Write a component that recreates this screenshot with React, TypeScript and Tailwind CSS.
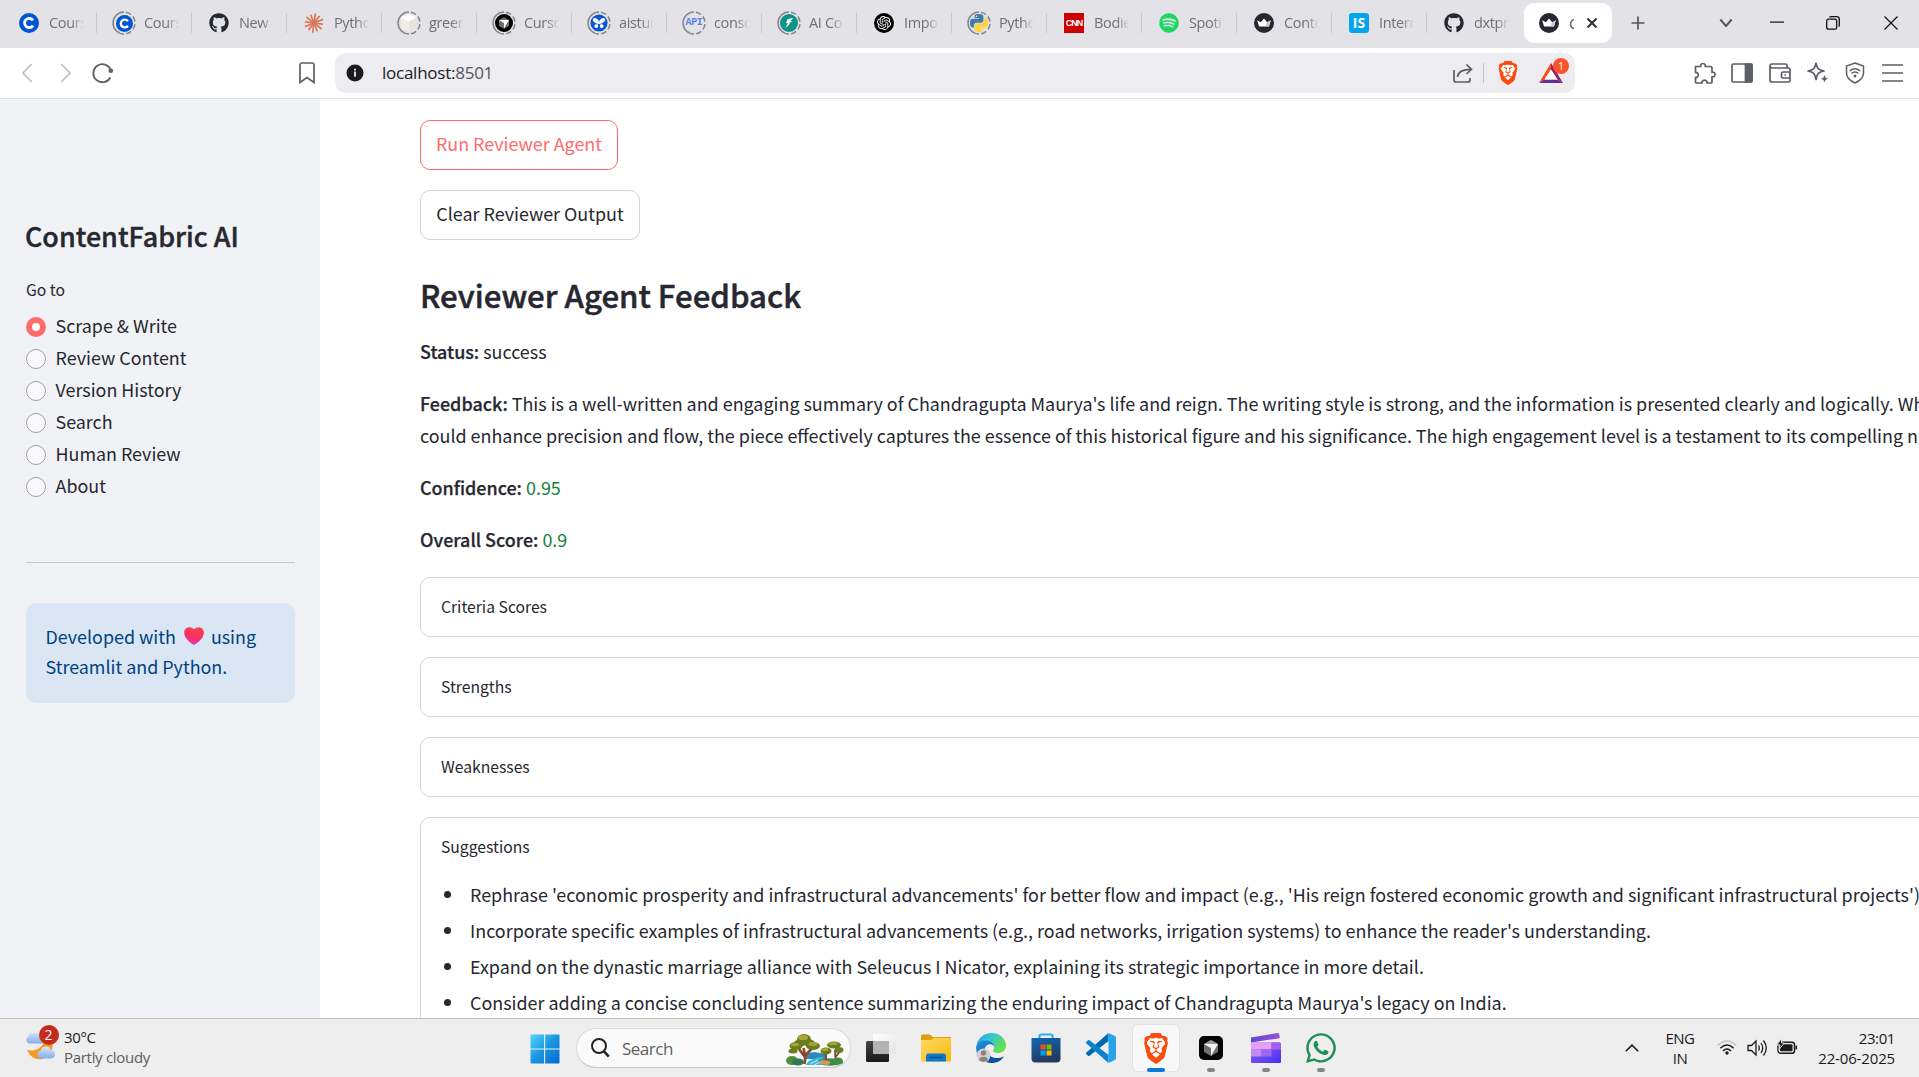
import type { ReactNode } from "react";
import { FaGithub, FaSpotify, FaWhatsapp } from "react-icons/fa";
import { SiBrave, SiOpenai } from "react-icons/si";

const UI = "font-['Open_Sans','Noto_Sans',sans-serif]";
const BODY = "font-['Noto_Sans_CJK_SC','Noto_Sans',sans-serif]";

/* ---------- tab icons ---------- */

const Ring = ({ children }: { children: ReactNode }) => (
  <span className="relative grid size-5 place-items-center">
    <svg className="absolute -left-0.5 -top-0.5 size-6" viewBox="0 0 24 24" fill="none" stroke="#85868c" strokeWidth="1.5">
      <path d="M12 1a11 11 0 0 0 0 22" />
      <path d="M12 1a11 11 0 0 1 0 22" strokeDasharray="5.5 2.7" strokeDashoffset="-2" />
    </svg>
    {children}
  </span>
);

const Coursera = ({ s = 20 }: { s?: number }) => (
  <svg width={s} height={s} viewBox="0 0 20 20">
    <circle cx="10" cy="10" r="10" fill="#0056d2" />
    <path d="M14 7.4A4.6 4.6 0 1 0 14 12.6" fill="none" stroke="#fff" strokeWidth="2.8" />
  </svg>
);

const Claude = () => (
  <svg width="20" height="20" viewBox="0 0 20 20" stroke="#d97757" strokeWidth="1.7" strokeLinecap="round">
    {[0, 30, 60, 90, 120, 150, 180, 210, 240, 270, 300, 330].map((a) => (
      <path key={a} d={a % 60 ? "M10 10V1.6" : "M10 10V.9"} transform={`rotate(${a + 8} 10 10)`} />
    ))}
  </svg>
);

const Cube = () => (
  <svg width="18" height="18" viewBox="0 0 18 18">
    <path d="M9 0l8 3.6v10L9 18l-8-4.400v-10z" fill="#efeee8" />
    <path d="M9 0l8 3.600L9 7.500 1 3.600z" fill="#fff" />
    <path d="M9 7.500V18l8-4.400v-10z" fill="#e6e4dc" />
  </svg>
);

const CursorDot = () => (
  <svg width="18" height="18" viewBox="0 0 18 18">
    <circle cx="9" cy="9" r="9" fill="#000" />
    <path d="M9 3.200l5 2.800v6L9 14.800 4 12V6z" fill="#6d6d6d" />
    <path d="M4 6h10L9 14.800V9z" fill="#fff" />
  </svg>
);

const AiStudio = () => (
  <svg width="18" height="18" viewBox="0 0 18 18">
    <circle cx="9" cy="9" r="8.600" fill="#0b57d0" />
    <g fill="#fff">
      <ellipse cx="5.800" cy="6.700" rx="3.300" ry="2.100" transform="rotate(40 5.800 6.700)" />
      <ellipse cx="12.200" cy="6.700" rx="3.300" ry="2.100" transform="rotate(-40 12.200 6.700)" />
      <circle cx="6.300" cy="12.100" r="1.900" />
      <circle cx="11.700" cy="12.100" r="1.900" />
      <path d="M6 11l3-3.500 3 3.500-3-1.200z" />
    </g>
  </svg>
);

const Api = () => (
  <span className="font-['Liberation_Mono',monospace] text-[10px] font-bold leading-none tracking-[-0.3px] text-[#5c82f2]">API</span>
);

const Filmora = () => (
  <svg width="18" height="18" viewBox="0 0 18 18">
    <circle cx="9" cy="9" r="9" fill="#0d9488" />
    <path d="M13.300 3.700L7.700 5.300 5.800 9.200l2.300-.3-3 5.300 5.200-4.800-1.700-.1 3.900-1.700-2-.5z" fill="#fff" />
  </svg>
);

const OpenAi = () => (
  <span className="grid size-5 place-items-center rounded-full bg-black text-white">
    <SiOpenai size={14} />
  </span>
);

const PY =
  "M14.250.180l.9.200.730.260.590.300.450.320.340.340.250.340.160.330.100.300.040.260.020.200-.010.130V8.500l-.050.630-.130.550-.210.460-.260.380-.300.310-.330.250-.350.190-.350.140-.330.100-.300.070-.260.040-.210.020H8.770l-.690.050-.590.140-.500.220-.410.270-.330.320-.270.350-.200.360-.150.370-.100.350-.070.320-.040.270-.020.210v3.060H3.170l-.210-.030-.280-.070-.320-.120-.350-.180-.360-.260-.360-.360-.350-.460-.320-.590-.280-.730-.210-.880-.140-1.050-.050-1.230.060-1.220.160-1.040.240-.870.320-.710.360-.570.400-.440.420-.330.420-.240.400-.160.360-.100.320-.050.240-.010h.160l.060.010h8.160v-.830H6.180l-.010-2.750-.020-.370.050-.340.110-.310.170-.280.250-.260.310-.230.380-.200.440-.180.510-.150.580-.120.640-.100.710-.060.770-.040.840-.020 1.270.050z";

const Python = () => (
  <svg width="18" height="18" viewBox="0 0 24 24">
    <path d={PY} fill="#3f7cb0" />
    <path d={PY} fill="#ffd43b" transform="rotate(180 12 12)" />
    <circle cx="8.600" cy="2.900" r="1" fill="#fff" />
    <circle cx="15.400" cy="21.100" r="1" fill="#fff" />
  </svg>
);

const Cnn = () => (
  <span className="grid size-5 place-items-center bg-[#cc0000] font-['Liberation_Sans',sans-serif] text-[9px] font-bold leading-none tracking-[-1px] text-white">
    CNN
  </span>
);

const Crown = () => (
  <svg width="20" height="20" viewBox="0 0 20 20">
    <circle cx="10" cy="10" r="10" fill="#262730" />
    <path d="M3.200 7.200l3.600 2.100L10 5.400l3.200 3.900 3.600-2.100-1.800 6.300H5z" fill="#fff" />
    <path d="M13.200 9.300l3.600-2.100-1.800 6.300h-3.500z" fill="#c9c9cc" />
  </svg>
);

const Internshala = () => (
  <span className="grid size-5 place-items-center rounded-[3px] bg-[#00a5ec] text-[14px] font-bold leading-none text-white">IS</span>
);

const Github = () => <FaGithub size={20} color="#24292f" />;

const TABS: { label: string; icon: ReactNode }[] = [
  { label: "Cours", icon: <Coursera /> },
  { label: "Cours", icon: <Ring><Coursera s={17} /></Ring> },
  { label: "New", icon: <Github /> },
  { label: "Pytho", icon: <Claude /> },
  { label: "green", icon: <Ring><Cube /></Ring> },
  { label: "Curso", icon: <Ring><CursorDot /></Ring> },
  { label: "aistud", icon: <Ring><AiStudio /></Ring> },
  { label: "conso", icon: <Ring><Api /></Ring> },
  { label: "AI Co", icon: <Ring><Filmora /></Ring> },
  { label: "Impo", icon: <OpenAi /> },
  { label: "Pytho", icon: <Ring><Python /></Ring> },
  { label: "Bodie", icon: <Cnn /> },
  { label: "Spotif", icon: <FaSpotify size={20} color="#1ed760" /> },
  { label: "Conte", icon: <Crown /> },
  { label: "Intern", icon: <Internshala /> },
  { label: "dxtpr", icon: <Github /> },
];

function TabStrip() {
  return (
    <div className={`flex h-12 shrink-0 items-center bg-[#e3e2e7] pb-0.5 pl-0.5 ${UI}`}>
      {TABS.map((t, i) => (
        <div
          key={i}
          className={`flex h-5 w-[95px] shrink-0 items-center pl-[17px] ${i < 15 ? "border-r border-[#c9c8cd]" : ""}`}
        >
          {t.icon}
          <span className="ml-[10px] w-[35px] overflow-hidden whitespace-nowrap text-[14.500px] leading-5 tracking-[-0.350px] text-[#6f7075] [mask-image:linear-gradient(to_right,#000_65%,transparent)]">
            {t.label}
          </span>
        </div>
      ))}
      <div className="ml-[2px] flex h-10 w-[88px] shrink-0 items-center rounded-[10px] bg-white pl-[15px]">
        <Crown />
        <span className="ml-[10px] w-[5px] overflow-hidden text-[15px] text-[#55565b]">C</span>
        <svg className="ml-[12px]" width="12" height="12" viewBox="0 0 12 12" stroke="#2f3033" strokeWidth="2">
          <path d="M1.500 1.500l9 9M10.500 1.500l-9 9" />
        </svg>
      </div>
      <svg className="ml-[19px]" width="14" height="14" viewBox="0 0 14 14" stroke="#55565b" strokeWidth="1.700">
        <path d="M7 .5v13M.5 7h13" />
      </svg>
      <svg className="ml-[74px]" width="14" height="10" viewBox="0 0 14 10" fill="none" stroke="#55565b" strokeWidth="1.900">
        <path d="M1.300 1.500L7 8l5.700-6.500" />
      </svg>
      <svg className="ml-[37px] mt-[-3px]" width="14" height="2" viewBox="0 0 14 2">
        <path d="M0 .5h14v1.200H0z" fill="#111" />
      </svg>
      <svg className="ml-[42px]" width="14" height="14" viewBox="0 0 14 14" fill="none" stroke="#111" strokeWidth="1.300">
        <rect x=".7" y="3.200" width="10" height="10" rx="1.800" />
        <path d="M3.500 1.200Q4 .7 5 .7h5.500a2.800 2.800 0 0 1 2.800 2.800V9q0 1-.6 1.500" />
      </svg>
      <svg className="ml-[44px]" width="14" height="14" viewBox="0 0 14 14" stroke="#111" strokeWidth="1.200">
        <path d="M.5.5l13 13M13.500.5l-13 13" />
      </svg>
    </div>
  );
}

function Toolbar() {
  const g = { fill: "none", stroke: "#5c5f64", strokeWidth: 1.7 } as const;
  return (
    <div className="flex h-[51px] shrink-0 items-center border-b border-[#e0e0e4] bg-white pl-[21px]">
      <svg width="12" height="20" viewBox="0 0 12 20" fill="none" stroke="#bdbec2" strokeWidth="1.700">
        <path d="M10.800 1L2 10l8.800 9" />
      </svg>
      <svg className="ml-[27px]" width="12" height="20" viewBox="0 0 12 20" fill="none" stroke="#bdbec2" strokeWidth="1.700">
        <path d="M1.200 1L10 10l-8.800 9" />
      </svg>
      <svg className="ml-[20px]" width="22" height="22" viewBox="0 0 22 22" fill="none" stroke="#5c5f64" strokeWidth="1.900">
        <path d="M18.300 15.500A9 9 0 1 1 18.800 8" />
        <circle cx="18.800" cy="8.800" r="2.300" fill="#5c5f64" stroke="none" />
      </svg>
      <svg className="ml-[185px]" width="16" height="22" viewBox="0 0 16 22" {...g}>
        <path d="M1 3a2 2 0 0 1 2-2h10a2 2 0 0 1 2 2v17.500l-7-5-7 5z" />
      </svg>
      <div className="ml-[20px] flex h-10 w-[1240px] items-center rounded-[10px] bg-[#edecf1] pl-[11px]">
        <svg width="18" height="18" viewBox="0 0 18 18">
          <circle cx="9" cy="9" r="8.500" fill="#1b1b1f" />
          <path d="M8.100 7.600h1.800v5.200H8.100zM8.100 4.700h1.800v1.800H8.100z" fill="#edecf1" />
        </svg>
        <span className={`ml-[18px] text-[17px] tracking-[-0.250px] text-[#1b1b1f] ${UI}`}>
          localhost:<span className="text-[#55565b]">8501</span>
        </span>
        <svg className="ml-auto" width="20" height="20" viewBox="0 0 20 20" {...g}>
          <path d="M1 7v10a2 2 0 0 0 2 2h12a2 2 0 0 0 2-2v-2M4.500 14C5 9 8.500 6.300 18 6.300M13.500 1.500l5 4.800-5 4.700" />
        </svg>
        <span className="ml-[10px] h-5 w-px bg-[#c4c4c9]" />
        <span className="ml-[13px] grid h-6 w-5 place-items-center">
          <Brave w={22} h={24} />
        </span>
        <span className="relative ml-[22px] mr-[12px] h-5 w-6">
          <svg width="24" height="20" viewBox="0 0 24 20">
            <path d="M12 0L0 20l5.500-3.500L12 6.500z" fill="#ff4724" />
            <path d="M12 0l12 20-5.500-3.500L12 6.500z" fill="#9e1f63" />
            <path d="M0 20h24l-5.500-3.500h-13z" fill="#662d91" />
            <path d="M12 6.500l6.500 10h-13z" fill="#fff" />
          </svg>
          <span className={`absolute -top-[5px] left-[14px] grid size-4 place-items-center rounded-full bg-[#fb542b] text-[10px] leading-none text-white ${UI}`}>1</span>
        </span>
      </div>
      <svg className="ml-[118px]" width="24" height="24" viewBox="0 0 24 24" {...g}>
        <path d="M2.500 5.500h5.200c-.8-4 5.400-4 4.600 0h5.200a1.500 1.500 0 0 1 1.500 1.500v4.200c4-.8 4 5.400 0 4.600V21a1 1 0 0 1-1 1h-4c.5-3.800-5.500-3.800-5 0H3.500a1 1 0 0 1-1-1v-4.500c3.800.5 3.800-5.500 0-5z" />
      </svg>
      <svg className="ml-[14px]" width="22" height="20" viewBox="0 0 22 20" {...g}>
        <rect x="1" y="1" width="20" height="18" rx="1.500" />
        <path d="M14.500 1h5.500a1 1 0 0 1 1 1v16a1 1 0 0 1-1 1h-5.500z" fill="#5c5f64" />
      </svg>
      <svg className="ml-[16px]" width="22" height="20" viewBox="0 0 22 20" {...g}>
        <path d="M18 5V2.500A1.500 1.500 0 0 0 16.500 1H3a2 2 0 0 0 0 4h16.500A1.500 1.500 0 0 1 21 6.500v11a1.500 1.500 0 0 1-1.500 1.500H3a2 2 0 0 1-2-2V3M21 9h-7a1.500 1.500 0 0 0-1.500 1.500v3A1.500 1.500 0 0 0 14 15h7M15.500 12h1.500" />
      </svg>
      <svg className="ml-[16px]" width="22" height="22" viewBox="0 0 22 22" {...g}>
        <path d="M9 1c1 5.500 2.500 7 8 8-5.500 1-7 2.500-8 8.500-1-6-2.500-7.500-8-8.500 5.500-1 7-2.500 8-8z" strokeLinejoin="round" />
        <path d="M17.500 13c.6 2.600 1.200 3.200 3.800 3.800-2.600.6-3.200 1.200-3.800 3.800-.6-2.600-1.200-3.200-3.800-3.800 2.600-.6 3.200-1.200 3.800-3.800z" fill="#5c5f64" stroke="none" />
      </svg>
      <svg className="ml-[16px]" width="20" height="22" viewBox="0 0 20 22" {...g} strokeWidth={1.5}>
        <path d="M10 1l8.500 3v7c0 4.500-4 8-8.500 10-4.500-2-8.500-5.500-8.500-10V4z" />
        <path d="M4.800 9q5.200-4.500 10.400 0M6.500 11.500q3.500-3 7 0" />
        <circle cx="10" cy="14" r="1.500" fill="#5c5f64" stroke="none" />
      </svg>
      <svg className="ml-[17px]" width="21" height="18" viewBox="0 0 21 18" {...g}>
        <path d="M0 1h21M0 9h21M0 17h21" />
      </svg>
    </div>
  );
}

function Brave({ w, h }: { w: number; h: number }) {
  return (
    <span className="relative grid place-items-center text-[#fb4a0e]">
      <svg className="absolute" width={w * 0.7} height={h * 0.76} viewBox="0 0 10 12">
        <path d="M1 0h8l1 5-5 7-5-7z" fill="#fff" />
      </svg>
      <SiBrave className="relative" style={{ width: w, height: h }} preserveAspectRatio="none" />
    </span>
  );
}

/* ---------- app ---------- */

const NAV = ["Scrape & Write", "Review Content", "Version History", "Search", "Human Review", "About"];

function Sidebar() {
  return (
    <aside className="flex w-[320px] shrink-0 flex-col bg-[#f0f2f6] pl-[26px] pr-[25px] pt-[119px]">
      <h1 className="-ml-px text-[26.900px] font-medium leading-[36px] [-webkit-text-stroke:0.4px_#262730]">ContentFabric AI</h1>
      <p className="mt-[24px] text-[15.700px] leading-6">Go to</p>
      <div className="mt-[9px]">
        {NAV.map((n, i) => (
          <div key={n} className="flex h-8 items-center gap-[9.500px] text-[17.900px] leading-8">
            {i === 0 ? (
              <span className="size-5 rounded-full border-[6px] border-[#ff6c6c] bg-white" />
            ) : (
              <span className="size-5 rounded-full border border-[#9b9ca2] bg-[#fafafc]" />
            )}
            <span className="-mt-1">{n}</span>
          </div>
        ))}
      </div>
      <hr className="mt-[59px] border-[#c6c8ce]" />
      <div className="mt-10 h-[100px] rounded-[10px] bg-[#dae6f4] pl-[19.500px] pt-[18px] text-[17.900px] leading-[30px] text-[#004280]">
        <p className="flex items-center">
          Developed with
          <svg className="ml-[8px] mr-[7px]" width="20" height="18" viewBox="0 0 20 17" preserveAspectRatio="none">
            <defs>
              <linearGradient id="heart" x1="0.600" y1="0" x2="0.300" y2="1">
                <stop offset="0" stopColor="#f8404e" />
                <stop offset="0.550" stopColor="#fa2e62" />
                <stop offset="1" stopColor="#d43ad0" />
              </linearGradient>
            </defs>
            <path d="M10 2.200C7.500-.700 1-.700.200 4.500-.300 10 5.500 14.500 10 17c4.500-2.500 10.300-7 9.800-12.500C19-.700 12.500-.700 10 2.200z" fill="url(#heart)" />
          </svg>
          using
        </p>
        <p>Streamlit and Python.</p>
      </div>
    </aside>
  );
}

const SUGGESTIONS = [
  "Rephrase 'economic prosperity and infrastructural advancements' for better flow and impact (e.g., 'His reign fostered economic growth and significant infrastructural projects')",
  "Incorporate specific examples of infrastructural advancements (e.g., road networks, irrigation systems) to enhance the reader's understanding.",
  "Expand on the dynastic marriage alliance with Seleucus I Nicator, explaining its strategic importance in more detail.",
  "Consider adding a concise concluding sentence summarizing the enduring impact of Chandragupta Maurya's legacy on India.",
];

function Expander({ title, children }: { title: string; children?: ReactNode }) {
  return (
    <section className={`w-[1600px] rounded-[10px] border border-[#d3d4d7] pl-5 ${children ? "h-[400px]" : "h-[60px]"}`}>
      <h3 className="text-[15.700px] leading-[58px]">{title}</h3>
      {children}
    </section>
  );
}

const Label = ({ children }: { children: ReactNode }) => (
  <b className="font-medium [-webkit-text-stroke:0.25px_#262730]">{children}</b>
);

function Main() {
  return (
    <main className="min-w-0 flex-1 overflow-hidden whitespace-nowrap bg-white pl-[100px] pt-[21px] text-[17.910px] leading-8">
      <div className="flex flex-col items-start gap-5">
        <button className="h-[50px] w-[198px] rounded-[10px] border border-[#ff6c6c] pb-[5px] text-[#ff6c6c]">Run Reviewer Agent</button>
        <button className="h-[50px] w-[220px] rounded-[10px] border border-[#d3d4d7] pb-[5px]">Clear Reviewer Output</button>
      </div>
      <h2 className="mt-[34px] text-[31.200px] font-medium leading-[42px] [-webkit-text-stroke:0.5px_#262730]">Reviewer Agent Feedback</h2>
      <div className="mt-[19px] flex flex-col gap-5">
        <p><Label>Status:</Label> success</p>
        <p>
          <Label>Feedback:</Label> This is a well-written and engaging summary of Chandragupta Maurya's life and reign. The writing style is strong, and the information is presented clearly and logically. Wh
          <br />
          could enhance precision and flow, the piece effectively captures the essence of this historical figure and his significance. The high engagement level is a testament to its compelling n
        </p>
        <p><Label>Confidence:</Label> <span className="text-[#158237]">0.95</span></p>
        <p><Label>Overall Score:</Label> <span className="text-[#158237]">0.9</span></p>
      </div>
      <div className="mt-[22px] flex flex-col gap-5">
        <Expander title="Criteria Scores" />
        <Expander title="Strengths" />
        <Expander title="Weaknesses" />
        <Expander title="Suggestions">
          <ul>
            {SUGGESTIONS.map((s) => (
              <li key={s} className="flex h-9 items-center gap-[19px] pl-[3px] leading-9">
                <span className="mt-px size-[7px] rounded-full bg-[#262730]" />
                {s}
              </li>
            ))}
          </ul>
        </Expander>
      </div>
    </main>
  );
}

/* ---------- taskbar ---------- */

function Tile({ children, on, dot }: { children: ReactNode; on?: boolean; dot?: boolean }) {
  return (
    <div className={`relative grid size-12 place-items-center rounded-[6px] ${on ? "border border-[#e2e2e2] bg-[#f8f8f8]" : ""}`}>
      {children}
      {on && <span className="absolute -bottom-px left-[14px] h-1 w-[18px] rounded-full bg-[#0a78d4]" />}
      {dot && <span className="absolute bottom-0 left-5 h-1 w-2 rounded-full bg-[#868686]" />}
    </div>
  );
}

const Windows = () => (
  <svg className="ml-px mt-px" width="30" height="30" viewBox="0 0 30 30">
    <defs>
      <linearGradient id="win" gradientUnits="userSpaceOnUse" x1="0" y1="0" x2="30" y2="30">
        <stop offset="0" stopColor="#58d6fd" />
        <stop offset="0.500" stopColor="#1b95e0" />
        <stop offset="1" stopColor="#0268cf" />
      </linearGradient>
    </defs>
    <path d="M1.500.5h12.600v14H.5v-13a1 1 0 0 1 1-1zM15.200.5h13.300a1 1 0 0 1 1 1v13H15.200zM.5 15.600h13.600v14H1.500a1 1 0 0 1-1-1zM15.200 15.600h14.300v13a1 1 0 0 1-1 1H15.200z" fill="url(#win)" />
  </svg>
);

const Trees = () => (
  <svg width="58" height="33" viewBox="0 0 58 33">
    <path d="M18 21l10-2 12 2v5H18z" fill="#2f88b5" />
    <path d="M20 32c2-5 7-6 13-8l6 1-5 3 9 4z" fill="#35b6e0" />
    <path d="M24 31l8-4M28 32l6-3" stroke="#bdeefa" strokeWidth="1" />
    <ellipse cx="6" cy="27.500" rx="6" ry="4.500" fill="#4f8f3c" />
    <ellipse cx="12" cy="29" rx="6" ry="3.500" fill="#2f7a52" />
    <path d="M32 28q8-5 24-1l1 3q-8 4-20 2z" fill="#3e8a4c" />
    <path d="M33 28q6-2 12 1l-3 3-8-1z" fill="#d79a5a" />
    <g fill="none" stroke="#8c4527">
      <path d="M18.500 31c1.500-6 0-11-1-16M19 24l-6-8M19.500 22l7-7" strokeWidth="2.600" />
      <path d="M49 29c1-5 0-8 0-12M49.500 24l4-5M40 27v-8" strokeWidth="1.900" />
    </g>
    <g fill="#6b7c1c">
      <ellipse cx="18" cy="6.500" rx="7" ry="5.500" />
      <ellipse cx="14" cy="10" rx="6" ry="3.500" />
      <ellipse cx="23" cy="10" rx="6" ry="3.500" />
      <ellipse cx="10" cy="13" rx="6.500" ry="4" />
      <ellipse cx="27" cy="13" rx="7" ry="4" />
      <ellipse cx="7" cy="18" rx="4.500" ry="2.500" />
      <ellipse cx="48" cy="12" rx="7" ry="3.500" />
      <ellipse cx="40" cy="18" rx="5.500" ry="3.500" />
      <ellipse cx="53" cy="17" rx="4.500" ry="3" />
    </g>
    <g fill="#a3a739">
      <ellipse cx="17" cy="4.500" rx="5" ry="2.600" />
      <ellipse cx="9" cy="11.500" rx="4" ry="1.800" />
      <ellipse cx="27" cy="11" rx="4.500" ry="1.900" />
      <ellipse cx="47" cy="10.500" rx="4.500" ry="1.600" />
      <ellipse cx="39" cy="16.500" rx="3.500" ry="1.500" />
    </g>
    <ellipse cx="52" cy="28" rx="5" ry="3.500" fill="#3f8e43" />
  </svg>
);

const TaskView = () => (
  <svg width="30" height="30" viewBox="0 0 30 30">
    <defs>
      <linearGradient id="tv" x1="0" y1="0" x2="0" y2="1">
        <stop offset="0" stopColor="#454545" />
        <stop offset="1" stopColor="#1a1a1a" />
      </linearGradient>
      <linearGradient id="tw" x1="0" y1="0" x2="1" y2="1">
        <stop offset="0" stopColor="#fff" />
        <stop offset="1" stopColor="#e4e4e4" />
      </linearGradient>
    </defs>
    <rect x="0" y="8" width="23" height="21" rx="1.500" fill="url(#tv)" />
    <rect x="7" y="1" width="23" height="20" rx="1.500" fill="url(#tw)" />
    <path d="M7 8h16v13H8.500A1.500 1.500 0 0 1 7 19.500z" fill="#b3b3b3" />
  </svg>
);

const Folder = () => (
  <svg width="30" height="30" viewBox="0 0 30 30">
    <defs>
      <linearGradient id="fo" x1="0" y1="0" x2="1" y2="1">
        <stop offset="0" stopColor="#ffd968" />
        <stop offset="1" stopColor="#f9b90c" />
      </linearGradient>
    </defs>
    <path d="M0 3a1.500 1.500 0 0 1 1.500-1.500H9L12 4h17a1 1 0 0 1 1 1v4H0z" fill="#e0a008" />
    <path d="M0 7h10l3-2h17v22a1.500 1.500 0 0 1-1.500 1.500h-27A1.500 1.500 0 0 1 0 27z" fill="url(#fo)" />
    <path d="M5 28.500V23a2.500 2.500 0 0 1 2.500-2.500h15A2.500 2.500 0 0 1 25 23v5.500z" fill="#0d78cd" />
    <path d="M8.500 24.500h13" stroke="#084a8d" strokeWidth="1.200" />
  </svg>
);

const Edge = () => (
  <svg width="30" height="30" viewBox="0 0 30 30">
    <defs>
      <linearGradient id="ea" x1="0" y1="0" x2="1" y2="0.500">
        <stop offset="0" stopColor="#2aa4e0" />
        <stop offset="0.500" stopColor="#35c8cf" />
        <stop offset="1" stopColor="#66e04e" />
      </linearGradient>
      <linearGradient id="eb" x1="0" y1="0" x2="0.500" y2="1">
        <stop offset="0" stopColor="#1f9ce6" />
        <stop offset="1" stopColor="#0a4fa8" />
      </linearGradient>
    </defs>
    <path d="M.5 12C2 5 8 0 15.500 0 24 0 30 6 30 12.500c0 5-4 7.500-8 7.500-3.500 0-5-1.300-5-2.300 0-.7 1.200-1.200 1.200-3.700C18.200 10.500 15 7.500 10.500 7.500 5 7.500 1.500 10 .5 12z" fill="url(#ea)" />
    <path d="M.2 14C.5 10 4.500 7.300 9.500 7.300c5 0 8.300 2.700 8.600 6.200-1-1.700-2.500-2.200-4-2.200-3.300 0-5.600 2.700-5.600 6.200 0 5 3 10 8.500 12.200C8 31-.6 24 .2 14z" fill="url(#eb)" />
    <path d="M11.500 17c0 6 5.500 8.500 11 8 2.600-.3 4.500-1.200 5.500-1.500-3 4.500-7.300 6.500-12.500 6.500-5.500-1-8.500-7-4-13z" fill="#0d4f9e" />
    <circle cx="7.500" cy="22.500" r="7" fill="#d0d0d0" />
    <circle cx="7.500" cy="20" r="2.700" fill="#8b8380" />
    <path d="M3 27c0-4.500 9-4.500 9 0-2 2.300-7 2.300-9 0z" fill="#8b8380" />
  </svg>
);

const Store = () => (
  <svg width="30" height="30" viewBox="0 0 30 30">
    <defs>
      <linearGradient id="st" x1="0" y1="0" x2="0.300" y2="1">
        <stop offset="0" stopColor="#1268b6" />
        <stop offset="1" stopColor="#23395f" />
      </linearGradient>
    </defs>
    <path d="M8.500 6V3.200A1.700 1.700 0 0 1 10.200 1.500h9.600A1.700 1.700 0 0 1 21.500 3.200V6" fill="none" stroke="#1fb3ee" strokeWidth="2" />
    <path d="M.5 5h29v20.500a4 4 0 0 1-4 4h-21a4 4 0 0 1-4-4z" fill="url(#st)" />
    <path d="M9.500 11.500h5v5h-5z" fill="#f25022" />
    <path d="M15.500 11.500h5v5h-5z" fill="#7fba00" />
    <path d="M9.500 17.500h5v5h-5z" fill="#00a4ef" />
    <path d="M15.500 17.500h5v5h-5z" fill="#ffb900" />
  </svg>
);

const VsCode = () => (
  <svg width="30" height="30" viewBox="0 0 30 30">
    <path d="M22.500 0v8L3.600 22.800a1.300 1.300 0 0 1-1.600 0L.400 21.300a1.200 1.200 0 0 1 0-1.800z" fill="#0068ad" />
    <path d="M22.500 30v-8L3.600 7.200a1.300 1.300 0 0 0-1.600 0L.400 8.700a1.200 1.200 0 0 0 0 1.800z" fill="#0a83cf" />
    <path d="M22.500 0l6.400 3a1.900 1.900 0 0 1 1.100 1.700v20.600a1.900 1.900 0 0 1-1.100 1.700l-6.400 3z" fill="#27a3ee" />
  </svg>
);

const CursorApp = () => (
  <svg width="24" height="24" viewBox="0 0 24 24">
    <rect width="24" height="24" rx="5" fill="#050505" />
    <path d="M12 4l7 4v8l-7 4-7-4V8z" fill="#6f6f6f" />
    <path d="M5 8h14l-7 12v-8z" fill="#f4f4f4" />
    <path d="M12 4l7 4H5z" fill="#9b9b9b" />
  </svg>
);

const Clipchamp = () => (
  <svg width="30" height="30" viewBox="0 0 30 30">
    <defs>
      <linearGradient id="cc" x1="0" y1="0" x2="1" y2="0">
        <stop offset="0" stopColor="#5a4ad6" />
        <stop offset="1" stopColor="#a04fd6" />
      </linearGradient>
      <linearGradient id="cd" x1="0" y1="0" x2="1" y2="1">
        <stop offset="0" stopColor="#8e66f0" />
        <stop offset="1" stopColor="#4a2df0" />
      </linearGradient>
    </defs>
    <path d="M0 4.500L26.500 0a1.500 1.500 0 0 1 1.700 1.200l.6 4L0 9.500z" fill="url(#cc)" />
    <path d="M0 9.500h28.500A1.500 1.500 0 0 1 30 11v17.500a1.500 1.500 0 0 1-1.500 1.500h-27A1.500 1.500 0 0 1 0 28.500z" fill="url(#cd)" />
    <path d="M0 9.500h20.500v7H0z" fill="#e3a0f7" />
    <path d="M20.500 9.500h8A1.500 1.500 0 0 1 30 11v5.500h-9.500z" fill="#a45cf5" />
    <path d="M0 16.500h10.500v7H0z" fill="#c48af5" />
    <path d="M10.500 16.500h10v7h-10z" fill="#9c68f2" />
  </svg>
);

const Weather = () => (
  <svg width="30" height="30" viewBox="0 0 30 30">
    <defs>
      <linearGradient id="cl" x1="0" y1="0" x2="0" y2="1">
        <stop offset="0" stopColor="#dbe6fb" />
        <stop offset="1" stopColor="#86aeea" />
      </linearGradient>
    </defs>
    <path d="M2 17c10 2 17-3 18-13 6 2 9 6 7 12-3 12-19 15-25 1z" fill="#f39a1f" />
    <path d="M3.500 10.500a3.800 3.800 0 0 1 0-7 5.500 5.500 0 0 1 10-2.500l4.500 9.500z" fill="url(#cl)" />
    <path d="M15.500 25.500a3.800 3.800 0 0 1 0-7.500 5.500 5.500 0 0 1 10.500-1 4.300 4.300 0 0 1 .5 8.500z" fill="url(#cl)" />
  </svg>
);

function Taskbar() {
  return (
    <footer className={`flex h-[59px] shrink-0 items-center border-t border-[#bdbdbd] bg-[#eeeeee] text-[15px] leading-5 text-[#1b1b1b] ${UI}`}>
      <div className="flex w-[520px] items-center pb-0.5 pl-[25px]">
        <div className="relative mt-0.5">
          <Weather />
          <span className="absolute -top-[8px] left-[13.500px] grid size-5 place-items-center rounded-full bg-[#c42b1c] text-[14px] leading-none text-white">2</span>
        </div>
        <div className="ml-[9px] tracking-[-0.350px]">
          <div>30°C</div>
          <div className="tracking-[-0.300px] text-[#5d5d5d]">Partly cloudy</div>
        </div>
      </div>
      <Tile><Windows /></Tile>
      <div className="ml-[8px] mr-[6px] flex h-10 w-[275px] items-center rounded-full border border-b-[#c4c4c4] border-[#dadada] bg-[#fafafa] pl-[14px] pr-[6px]">
        <svg width="19" height="20" viewBox="0 0 19 20" fill="none" stroke="#222" strokeWidth="2">
          <circle cx="8" cy="8" r="7" />
          <path d="M12.800 13.200l5 5.500" strokeWidth="2.500" />
        </svg>
        <span className="ml-[12px] mt-px text-[17px] tracking-[-0.500px] text-[#616161]">Search</span>
        <span className="ml-auto mt-0.5"><Trees /></span>
      </div>
      <div className="flex gap-[7px]">
        <Tile><TaskView /></Tile>
        <Tile><Folder /></Tile>
        <Tile><Edge /></Tile>
        <Tile><Store /></Tile>
        <Tile><VsCode /></Tile>
        <Tile on><Brave w={28} h={31} /></Tile>
        <Tile dot><CursorApp /></Tile>
        <Tile dot><Clipchamp /></Tile>
        <Tile dot><FaWhatsapp size={34} color="#1f8f57" /></Tile>
      </div>
      <div className="ml-auto flex items-center pb-px pr-[24px]">
        <svg width="14" height="8" viewBox="0 0 14 8" fill="none" stroke="#1b1b1b" strokeWidth="1.600">
          <path d="M.8 7.200L7 1.200l6.200 6" />
        </svg>
        <div className="ml-[26px] w-[30px] text-center tracking-[-0.500px]">
          <div>ENG</div>
          <div>IN</div>
        </div>
        <svg className="ml-[22px]" width="20" height="15" viewBox="0 0 20 15" fill="none" stroke="#1b1b1b" strokeWidth="1.400">
          <path d="M.7 5.500q9.300-9 18.600 0" stroke="#c2c2c2" />
          <path d="M3.300 8.300q6.700-6.500 13.400 0M6 11q4-4 8 0" />
          <circle cx="10" cy="13" r="1.700" fill="#1b1b1b" stroke="none" />
        </svg>
        <svg className="ml-[10px]" width="21" height="18" viewBox="0 0 21 18" fill="none" stroke="#1b1b1b" strokeWidth="1.300">
          <path d="M1 6.500h3.500L9 2v14l-4.500-4.500H1zM11.500 6.500q1.700 2.500 0 5M14 4q3.500 5 0 10M16.500 1.500q5.500 7.500 0 15" />
        </svg>
        <svg className="mb-0.5 ml-[9px]" width="21" height="17" viewBox="0 0 21 17">
          <rect x="1" y="4.200" width="16.500" height="11" rx="2.500" fill="none" stroke="#1b1b1b" strokeWidth="1.400" />
          <rect x="3" y="6.200" width="12.500" height="7" rx="1" fill="#1b1b1b" />
          <path d="M18.500 7.500h1.500v4h-1.500z" fill="#1b1b1b" />
          <path d="M4.500 0L0 7h3L2 11.500 7.300 5H4.500z" fill="#1b1b1b" stroke="#eee" strokeWidth=".9" />
        </svg>
        <div className="ml-[19px] w-[78px] text-right tracking-[-0.150px]">
          <div className="tracking-[-0.400px]">23:01</div>
          <div>22-06-2025</div>
        </div>
      </div>
    </footer>
  );
}

export default function App() {
  return (
    <div className="flex h-[1077px] w-[1919px] flex-col overflow-hidden bg-white">
      <TabStrip />
      <Toolbar />
      <div className={`flex min-h-0 flex-1 overflow-hidden text-[#262730] ${BODY}`}>
        <Sidebar />
        <Main />
      </div>
      <Taskbar />
    </div>
  );
}
